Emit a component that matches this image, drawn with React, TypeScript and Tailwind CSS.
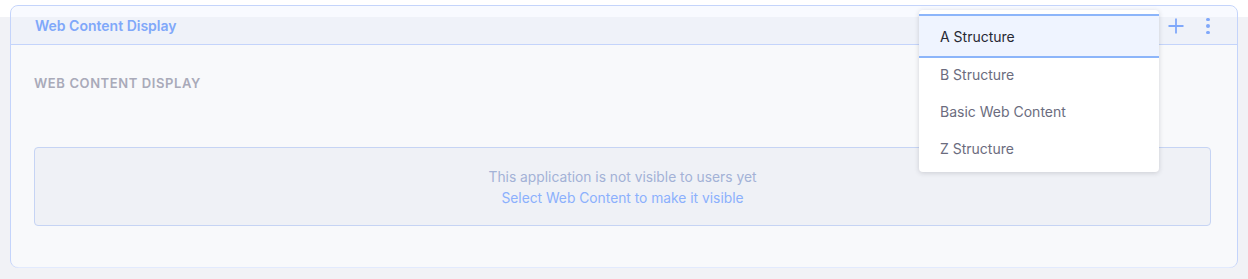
const items = ["A Structure", "B Structure", "Basic Web Content", "Z Structure"];

function StructureMenu() {
  return (
    <div className="absolute left-[908px] top-[4px] z-10 w-[240px] rounded-[4px] bg-white pt-[8px] pb-[6px] shadow-[0_1px_5px_rgba(39,40,51,0.18)]">
      {items.map((label, i) =>
        i === 0 ? (
          <div
            key={label}
            className="-mt-[4px] -mb-[3px] flex h-[44px] items-center border-y-2 border-[#8cb5fa] bg-[#eff4ff] px-[21px] pt-[1px] text-[14px] text-[#272833]"
          >
            {label}
          </div>
        ) : (
          <div key={label} className="flex h-[37px] items-center px-[21px] pt-[1px] text-[14px] text-[#6b6c7e]">
            {label}
          </div>
        )
      )}
    </div>
  );
}

export default function App() {
  return (
    <div
      className="h-[279px] w-[1248px] overflow-hidden bg-[linear-gradient(to_bottom,#ffffff_17px,#f1f2f6_17px)] px-[10px] pt-[5px]"
      style={{ fontFamily: "Inter, 'Noto Sans', sans-serif" }}
    >
      <div className="relative h-[263px] rounded-[8px] border border-[#c4d4fb]">
        {/* header */}
        <div className="flex h-[39px] items-center justify-between rounded-t-[8px] border-b border-[#c4d4fb] bg-[rgba(235,242,254,0.36)] pl-[24px] pr-[27px]">
          <span className="text-[14px] font-semibold text-[#80a8fa]">Web Content Display</span>
          <div className="flex items-center gap-[22px] pt-[2px]">
            <svg width="16" height="16" viewBox="0 0 16 16" className="text-[#80a8fa]">
              <path d="M8 0.5v15M0.5 8h15" stroke="currentColor" strokeWidth="1.8" fill="none" />
            </svg>
            <div className="flex w-[4px] flex-col items-center gap-[3px]">
              <span className="h-[3.5px] w-[3.5px] rounded-full bg-[#80a8fa]" />
              <span className="h-[3.5px] w-[3.5px] rounded-full bg-[#80a8fa]" />
              <span className="h-[3.5px] w-[3.5px] rounded-full bg-[#80a8fa]" />
            </div>
          </div>
        </div>

        {/* body */}
        <div className="h-[223px] rounded-b-[8px] bg-white/50 pt-[30px]">
          <div className="pl-[23px] text-[13px] leading-[16px] font-semibold tracking-[0.6px] text-[#a9aab9] uppercase">
            Web Content Display
          </div>
          <div className="mt-[56px] ml-[23px] mr-[26px] flex h-[79px] flex-col items-center justify-center rounded-[4px] border border-[#c6d4f4] bg-[#eff1f6] pt-[2px] text-[13.8px] leading-[21px]">
            <span className="text-[#a3b2d6]">This application is not visible to users yet</span>
            <span className="text-[#8bb0fd]">Select Web Content to make it visible</span>
          </div>
        </div>

        <StructureMenu />
      </div>
    </div>
  );
}
